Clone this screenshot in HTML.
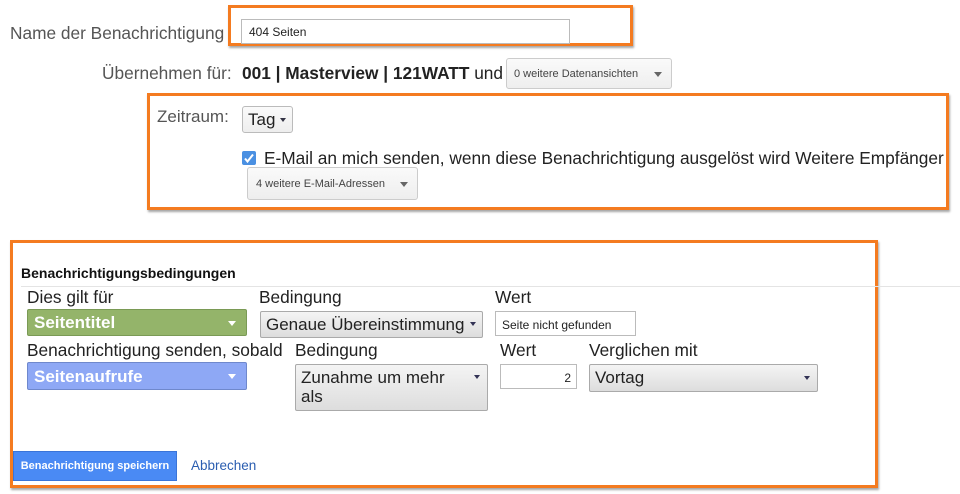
<!DOCTYPE html>
<html><head><meta charset="utf-8"><style>
body{margin:0;width:960px;height:494px;background:#fff;position:relative;overflow:hidden;font-family:"Liberation Sans",Arial,sans-serif;}
.a{position:absolute;white-space:nowrap;}
.ob{position:absolute;border:3px solid #f47b20;box-shadow:1px 2px 2px rgba(0,0,0,.35);box-sizing:border-box;}
.dd{position:absolute;box-sizing:border-box;border:1px solid #ccc;border-radius:3px;background:linear-gradient(#fafafa,#eee);font-size:11px;color:#444;}
.tri{position:absolute;width:0;height:0;border-left:4px solid transparent;border-right:4px solid transparent;border-top:5px solid #666;}
.sel{position:absolute;box-sizing:border-box;border:1px solid #aaa;border-radius:2px;background:linear-gradient(#f4f4f4,#ddd);font-size:17px;color:#222;}
.inp{position:absolute;box-sizing:border-box;border:1px solid #bbb;background:#fff;font-size:12px;color:#222;}
.lbl{position:absolute;font-size:17.3px;color:#222;white-space:nowrap;}
</style></head><body>
<div class="ob" style="left:228px;top:5px;width:405px;height:41px"></div>
<div class="a" style="left:10px;top:23px;font-size:17.3px;color:#555">Name der Benachrichtigung</div>
<div class="inp" style="left:241px;top:19px;width:329px;height:25px;padding:5px 0 0 7px">404 Seiten</div>

<div class="a" style="left:102px;top:63px;font-size:17.3px;color:#555">Übernehmen für:</div>
<div class="a" style="left:242px;top:63px;font-size:17.3px;color:#222"><b>001 | Masterview | 121WATT</b> und</div>
<div class="dd" style="left:506px;top:58px;width:166px;height:31px;padding:9px 0 0 7px">0 weitere Datenansichten<div class="tri" style="left:147px;top:13px"></div></div>

<div class="ob" style="left:147px;top:93px;width:802px;height:117px"></div>
<div class="a" style="left:157px;top:107px;font-size:17px;color:#555">Zeitraum:</div>
<div class="dd" style="left:242px;top:106px;width:51px;height:27px;border-color:#bbb;font-size:17px;color:#222;padding:3px 0 0 5px">Tag<div class="tri" style="left:37px;top:11px;border-top-color:#334;border-left-width:3px;border-right-width:3px;border-top-width:4px"></div></div>
<div class="a" style="left:242px;top:151px;width:14px;height:14px;background:#4a90e2;border-radius:2px"><svg width="14" height="14"><path d="M3 7.5l2.5 3L11 3.5" stroke="#fff" stroke-width="2" fill="none"/></svg></div>
<div class="a" style="left:264px;top:148px;font-size:17.3px;color:#222">E-Mail an mich senden, wenn diese Benachrichtigung ausgelöst wird Weitere Empfänger</div>
<div class="dd" style="left:247px;top:167px;width:171px;height:33px;padding:10px 0 0 8px">4 weitere E-Mail-Adressen<div class="tri" style="left:152px;top:14px"></div></div>

<div class="ob" style="left:10px;top:240px;width:868px;height:248px"></div>
<div class="a" style="left:21px;top:265px;font-size:14px;font-weight:bold;color:#111">Benachrichtigungsbedingungen</div>
<div class="a" style="left:21px;top:286px;width:939px;height:1px;background:#e4e4e4"></div>

<div class="lbl" style="left:27px;top:287px">Dies gilt für</div>
<div class="sel" style="left:27px;top:309px;width:220px;height:27px;background:#94b46a;border-color:#7a9a55;color:#fff;font-weight:bold;font-size:17px;padding:3px 0 0 6px">Seitentitel<div class="tri" style="left:200px;top:11px;border-top-color:#fff"></div></div>
<div class="lbl" style="left:259px;top:287px">Bedingung</div>
<div class="sel" style="left:260px;top:311px;width:223px;height:27px;padding:3px 0 0 5px">Genaue Übereinstimmung<div class="tri" style="left:209px;top:10px;border-top-color:#335;border-left-width:3px;border-right-width:3px;border-top-width:4px"></div></div>
<div class="lbl" style="left:495px;top:287px">Wert</div>
<div class="inp" style="left:495px;top:311px;width:141px;height:25px;padding:6px 0 0 6px">Seite nicht gefunden</div>

<div class="lbl" style="left:27px;top:340px">Benachrichtigung senden, sobald</div>
<div class="sel" style="left:27px;top:362px;width:220px;height:28px;background:#8ea8f5;border-color:#6f88cc;color:#fff;font-weight:bold;font-size:17px;padding:4px 0 0 6px">Seitenaufrufe<div class="tri" style="left:200px;top:11px;border-top-color:#fff"></div></div>
<div class="lbl" style="left:295px;top:340px">Bedingung</div>
<div class="sel" style="left:295px;top:364px;width:193px;height:47px;padding:3px 0 0 5px;white-space:normal;line-height:19px">Zunahme um mehr<br>als<div class="tri" style="left:178px;top:10px;border-top-color:#335;border-left-width:3px;border-right-width:3px;border-top-width:4px"></div></div>
<div class="lbl" style="left:500px;top:340px">Wert</div>
<div class="inp" style="left:500px;top:364px;width:77px;height:25px;text-align:right;padding:6px 5px 0 0">2</div>
<div class="lbl" style="left:589px;top:340px">Verglichen mit</div>
<div class="sel" style="left:589px;top:364px;width:229px;height:28px;padding:3px 0 0 5px">Vortag<div class="tri" style="left:214px;top:11px;border-top-color:#335;border-left-width:3px;border-right-width:3px;border-top-width:4px"></div></div>

<div class="a" style="left:13px;top:451px;width:164px;height:30px;background:#4a8af4;border:1px solid #3a74d8;box-sizing:border-box;color:#fff;font-size:11px;font-weight:bold;text-align:center;line-height:28px">Benachrichtigung speichern</div>
<div class="a" style="left:191px;top:458px;font-size:13.5px;color:#2a5db0">Abbrechen</div>
</body></html>
